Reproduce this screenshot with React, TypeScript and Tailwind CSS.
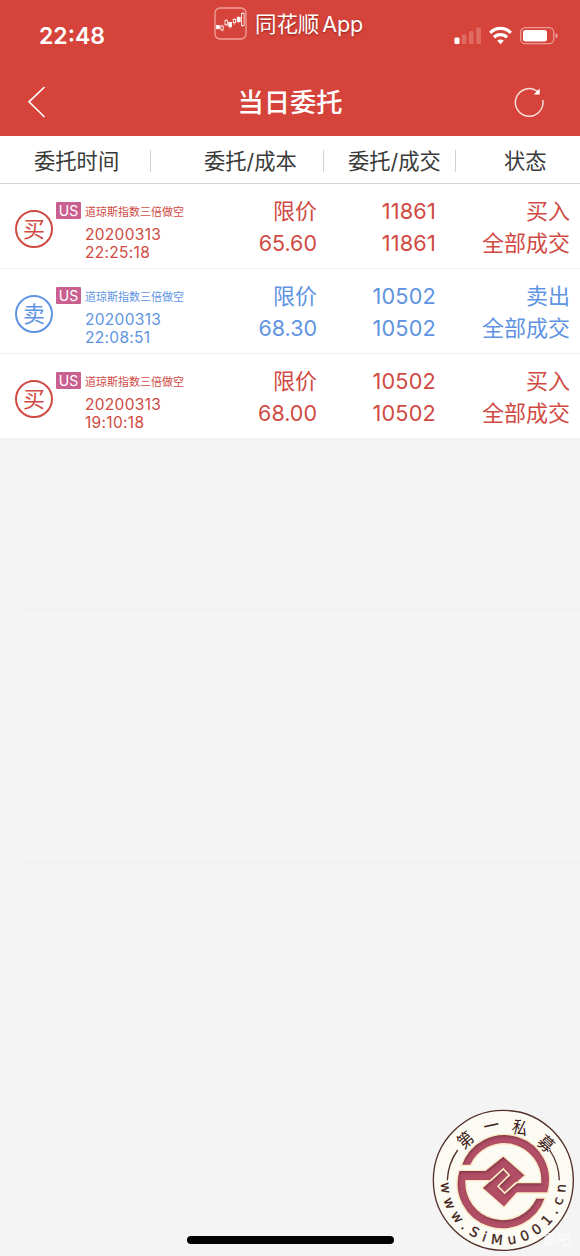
import React from "react";

interface Order {
  side: "buy" | "sell";
  name: string;
  date: string;
  time: string;
  type: string;
  price: string;
  ordered: string;
  filled: string;
  action: string;
  status: string;
}

const orders: Order[] = [
  {
    side: "buy",
    name: "道琼斯指数三倍做空",
    date: "20200313",
    time: "22:25:18",
    type: "限价",
    price: "65.60",
    ordered: "11861",
    filled: "11861",
    action: "买入",
    status: "全部成交",
  },
  {
    side: "sell",
    name: "道琼斯指数三倍做空",
    date: "20200313",
    time: "22:08:51",
    type: "限价",
    price: "68.30",
    ordered: "10502",
    filled: "10502",
    action: "卖出",
    status: "全部成交",
  },
  {
    side: "buy",
    name: "道琼斯指数三倍做空",
    date: "20200313",
    time: "19:10:18",
    type: "限价",
    price: "68.00",
    ordered: "10502",
    filled: "10502",
    action: "买入",
    status: "全部成交",
  },
];

const AppBadge: React.FC = () => (
  <svg className="h-[33px] w-[33px] shrink-0" viewBox="0 0 33 33" fill="none">
    <rect x="1" y="1" width="31" height="31" rx="5" stroke="#f0a19b" strokeWidth="1.3" />
    <g stroke="#fff" strokeWidth="0.8">
      <path d="M8 17.5v7M12.2 12v7M16 15v7M20.4 11v7M24.6 9v7M28.7 5v15" opacity="0.7" />
      <rect x="2.5" y="18.500" width="3" height="3.200" fill="#fff" />
      <rect x="6.900" y="19" width="2.300" height="4" fill="#d5433a" />
      <rect x="11" y="13.500" width="2.400" height="4.300" fill="#d5433a" />
      <rect x="14.800" y="15.500" width="2.800" height="4.200" fill="#fff" />
      <rect x="19.200" y="12.500" width="2.400" height="3.200" fill="#d5433a" />
      <rect x="23.200" y="10.500" width="3" height="4.200" fill="#fff" />
      <rect x="27.500" y="6.500" width="2.600" height="12" fill="#d5433a" />
    </g>
  </svg>
);

const StatusIcons: React.FC = () => (
  <svg className="h-5 w-[106px]" viewBox="0 0 106 20" fill="none">
    <rect x="0.500" y="11.500" width="5" height="6.500" rx="1.200" fill="#fff" />
    <g fill="#e06b63">
      <rect x="7.800" y="8.500" width="4.600" height="9.500" rx="1.200" />
      <rect x="15" y="5" width="4.600" height="13" rx="1.200" />
      <rect x="22.300" y="1.500" width="4.600" height="16.500" rx="1.200" />
    </g>
    <g stroke="#fff" strokeWidth="3.200">
      <path d="M36.200 6.800a14.300 14.300 0 0 1 20.600 0" />
      <path d="M40 11.400a9 9 0 0 1 13 0" />
    </g>
    <path d="M43.200 14.800a4.700 4.700 0 0 1 6.600 0L46.500 18.200z" fill="#fff" />
    <rect x="66.700" y="1.700" width="33" height="16" rx="4.500" stroke="#eb9b95" strokeWidth="1.300" />
    <rect x="69" y="4" width="24" height="11.500" rx="2.500" fill="#fff" />
    <path d="M101.500 7v5.400q2.300-.7 2.300-2.700t-2.300-2.700z" fill="#eb9b95" />
  </svg>
);

const RefreshIcon: React.FC = () => (
  <svg className="h-8 w-8" viewBox="0 0 32 32" fill="none">
    <path d="M24.400 5.300A13.800 13.800 0 1 0 29.800 14" stroke="#fbdedb" strokeWidth="1.500" />
    <path d="M26.700 2.500v6h-6z" fill="#fff" />
  </svg>
);

const AppTitle: React.FC = () => (
  <div className="flex w-[240px] gap-2 pt-[7px]">
    <AppBadge />
    <span className="text-[21.500px] leading-[34px] tracking-[-0.1px] whitespace-nowrap [word-spacing:-3px] [text-shadow:0_1px_2px_rgba(90,0,0,0.5)]">
      同花顺 App
    </span>
  </div>
);

const Header: React.FC = () => (
  <header className="h-[136px] bg-[#d5433a] text-white">
    <div className="flex h-[68px]">
      <div className="w-[214px] pt-[22px] pl-[39px] text-[23px] leading-7 font-semibold">22:48</div>
      <AppTitle />
      <div className="pt-[26px]">
        <StatusIcons />
      </div>
    </div>
    <div className="flex h-[68px] items-center justify-between pr-[35px] pl-[27px]">
      <svg className="h-8 w-10" viewBox="0 0 40 32" fill="none" stroke="#fff" strokeWidth="1.600">
        <path d="M17.500 1L2 15.800L17.500 31" />
      </svg>
      <h1 className="pt-px text-[26.300px] font-medium">当日委托</h1>
      <RefreshIcon />
    </div>
  </header>
);

const Divider: React.FC = () => <span className="h-[22px] w-px bg-[#d2d2d2]" />;

const TableHead: React.FC = () => (
  <div className="flex h-12 items-center border-b border-[#d4d4d4] bg-white pt-[3px] text-[21.300px] text-[#3a3a3a]">
    <span className="w-[150px] pt-[2px] pl-[34px]">委托时间</span>
    <Divider />
    <span className="w-[172px] pt-[2px] pl-[53px]">委托/成本</span>
    <Divider />
    <span className="w-[131px] pt-[2px] pl-6">委托/成交</span>
    <Divider />
    <span className="flex-1 pt-[2px] pl-12">状态</span>
  </div>
);

const OrderRow: React.FC<{ order: Order }> = ({ order }) => (
  <div
    className={
      "flex h-[85px] border-b border-[#f1f1f1] bg-white pr-[10px] pl-[15px] " +
      (order.side === "buy" ? "text-[#d04a43]" : "text-[#6094e2]")
    }
  >
    <div className="mt-[26px] flex h-[38px] w-[38px] items-center justify-center rounded-full border-2 border-current text-[22px] leading-none">
      {order.side === "buy" ? "买" : "卖"}
    </div>
    <div className="mt-[18px] ml-[3px] flex h-[17px] w-[25px] items-center justify-center rounded-[1px] bg-[#c9608f] text-[14px] leading-none text-white">
      US
    </div>
    <div className="w-[140px] pt-5 pl-1">
      <div className="text-[11px] leading-4">{order.name}</div>
      <div className="mt-[6px] text-[15.500px] leading-[18px] tracking-[0.020em]">
        {order.date}
        <br />
        {order.time}
      </div>
    </div>
    <div className="w-24 pt-[11px] text-right text-[22px] leading-8">
      <div>{order.type}</div>
      <div className="text-[21.500px]">{order.price}</div>
    </div>
    <div className="w-[119px] pt-[11px] text-right text-[21.700px] leading-8 tracking-[0.2px]">
      <div>{order.ordered}</div>
      <div>{order.filled}</div>
    </div>
    <div className="flex-1 pt-[11px] text-right text-[22px] leading-8">
      <div>{order.action}</div>
      <div>{order.status}</div>
    </div>
  </div>
);

const sealTop =
  "M109 196A136 136 0 0 1 368 279H276L237 322L171 264L235 207L252 225L219 259L239 279L272 248H347A110 110 0 0 0 137 196z";
const sealBottom =
  "M361 294A136 136 0 0 1 102 211H181L235 168L301 226L239 280L219 259L253 226L235 207L198 242H123A110 110 0 0 0 333 294z";

const Seal: React.FC = () => (
  <svg className="h-[156px] w-[155px]" viewBox="0 0 465 468" fill="none">
    <defs>
      <filter id="seal-shade" x="-10%" y="-10%" width="120%" height="120%">
        <feOffset in="SourceAlpha" dx="2" dy="6" result="moved" />
        <feGaussianBlur in="moved" stdDeviation="4" result="soft" />
        <feComposite in="SourceAlpha" in2="soft" operator="out" result="edge" />
        <feFlood floodColor="#3d1020" floodOpacity="0.65" />
        <feComposite in2="edge" operator="in" result="shade" />
        <feMerge>
          <feMergeNode in="SourceGraphic" />
          <feMergeNode in="shade" />
        </feMerge>
      </filter>
    </defs>
    <circle cx="235" cy="241" r="210" fill="#fbfaf3" stroke="#533029" strokeWidth="4" />
    <path d="M67 241A168 168 0 0 1 98 150M403 241A168 168 0 0 0 374 150" stroke="#533029" strokeWidth="4" />
    <g fill="#3f1d19" fontSize="52" textAnchor="middle">
      <text transform="translate(121 120) rotate(-40) scale(0.9 1)" y="19">第</text>
      <text transform="translate(199 77) rotate(-12) scale(0.9 1)" y="19">一</text>
      <text transform="translate(285 83) rotate(14) scale(0.9 1)" y="19">私</text>
      <text transform="translate(363 131) rotate(42) scale(0.9 1)" y="19">募</text>
    </g>
    <path id="seal-arc" d="M48 247A187 187 0 0 0 422 247" />
    <text fill="#3f1d19" stroke="#3f1d19" strokeWidth="0.8" fontSize="41" fontFamily="DejaVu Sans, sans-serif">
      <textPath href="#seal-arc" startOffset="1" textLength="580">
        www.SiMu001.cn
      </textPath>
    </text>
    <g fill="#b04f66">
      <path d={sealTop} filter="url(#seal-shade)" />
      <path d={sealBottom} filter="url(#seal-shade)" />
    </g>
    <g stroke="#fbe9c3" strokeWidth="4">
      <path d={sealTop} />
      <path d={sealBottom} />
    </g>
  </svg>
);

const App: React.FC = () => {
  return (
    <div className="relative h-[1256px] w-[580px] overflow-hidden bg-[#f4f4f4] font-['Inter','Noto_Sans_CJK_SC',sans-serif]">
      <Header />
      <TableHead />
      {orders.map((order) => (
        <OrderRow key={order.time} order={order} />
      ))}
      <div className="ml-[22px]">
        {Array.from({ length: 9 }, (_, i) => (
          <div key={i} className="h-[85px] border-b border-[#f0f0f0]" />
        ))}
      </div>
      <div className="absolute top-[1100px] left-[425px]">
        <Seal />
      </div>
      <div className="absolute right-[9px] bottom-[7px] text-[14px] leading-5 font-medium text-white/70">票吧</div>
      <div className="absolute bottom-[12px] left-[187px] h-2 w-[207px] rounded-full bg-black" />
    </div>
  );
};

export default App;
